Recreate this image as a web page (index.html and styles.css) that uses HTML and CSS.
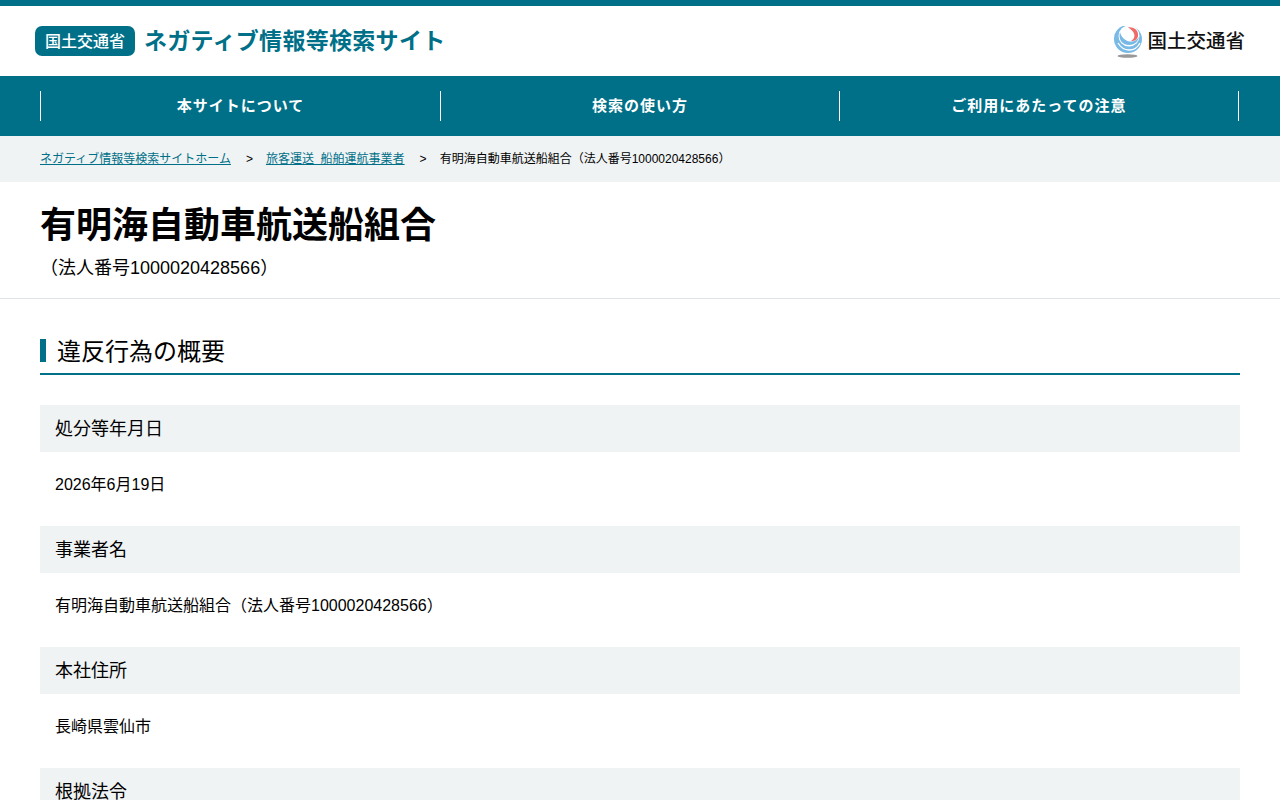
FILE: index.html
```html
<!DOCTYPE html>
<html lang="ja">
<head>
  <meta charset="UTF-8">
  <meta name="viewport" content="width=device-width, initial-scale=1.0">
  <title>有明海自動車航送船組合 | ネガティブ情報等検索サイト</title>
  <link rel="stylesheet" href="styles.css">
</head>
<body>

  <header class="ng-header">
    <a href="#" class="ng-brand">
      <span class="ng-brand__badge">国土交通省</span>
      <span class="ng-brand__name">ネガティブ情報等検索サイト</span>
    </a>
    <a href="#" class="ng-mlit">
      <svg class="ng-mlit__mark" viewBox="0 0 28 32" width="28" height="32" aria-hidden="true">
        <circle cx="14" cy="13" r="14" fill="#78b9e6"/>
        <path d="M13 0H28V10C26 4 20 -1 13 0Z" fill="#fff"/>
        <circle cx="15" cy="10" r="10.5" fill="#fff"/>
        <path d="M6 6C4 13 8 19 15 19C20 19 24 16 25 11C23 14 20 16 16 15.5C11 15 7 11 6 6Z" fill="#78b9e6"/>
        <path d="M4 17C7 22 11 24 15 24C20 24 24 21 26 17" fill="none" stroke="#fff" stroke-width="1.3"/>
        <path d="M14 1.5C20 0.5 25 5 24 10C23.5 13.5 20 16 17 14.5C20 13.5 21 10.5 20 7.5C19 5 17 3 14 1.5Z" fill="#ee6b66"/>
        <ellipse cx="13.5" cy="30" rx="10" ry="1.8" fill="#999999"/>
      </svg>
      <span class="ng-mlit__name">国土交通省</span>
    </a>
  </header>

  <nav class="ng-nav">
    <ul class="ng-nav__list">
      <li class="ng-nav__item"><a href="#">本サイトについて</a></li>
      <li class="ng-nav__item"><a href="#">検索の使い方</a></li>
      <li class="ng-nav__item"><a href="#">ご利用にあたっての注意</a></li>
    </ul>
  </nav>

  <ol class="ng-crumbs">
    <li><a href="#">ネガティブ情報等検索サイトホーム</a></li>
    <li><a href="#">旅客運送&nbsp;&nbsp;船舶運航事業者</a></li>
    <li>有明海自動車航送船組合（法人番号1000020428566）</li>
  </ol>

  <div class="ng-title">
    <h1 class="ng-title__name">有明海自動車航送船組合</h1>
    <p class="ng-title__no">（法人番号1000020428566）</p>
  </div>

  <main class="ng-main">
    <h2 class="ng-heading"><span>違反行為の概要</span></h2>

    <section class="ng-row">
      <h3 class="ng-row__label">処分等年月日</h3>
      <p class="ng-row__value">2026年6月19日</p>
    </section>
    <section class="ng-row">
      <h3 class="ng-row__label">事業者名</h3>
      <p class="ng-row__value">有明海自動車航送船組合（法人番号1000020428566）</p>
    </section>
    <section class="ng-row">
      <h3 class="ng-row__label">本社住所</h3>
      <p class="ng-row__value">長崎県雲仙市</p>
    </section>
    <section class="ng-row">
      <h3 class="ng-row__label">根拠法令</h3>
    </section>
  </main>

</body>
</html>
```

FILE: styles.css
```css
/* Root resets */
* { margin: 0; padding: 0; box-sizing: border-box; }
html, body { height: 800px; overflow: hidden; }
body { font-family: "Liberation Sans", "Noto Sans CJK JP", sans-serif; background-color: #ffffff; color: #000000; }
ul, ol { list-style: none; }

/* Header */
.ng-header {
  display: flex;
  justify-content: space-between;
  align-items: center;
  height: 76px;
  padding: 0 35px;
  border-top: 6px solid #007088;
}
.ng-brand { display: flex; align-items: center; gap: 9px; text-decoration: none; }
.ng-brand__badge {
  width: 100px;
  height: 30px;
  line-height: 31px;
  text-align: center;
  font-size: 16px;
  font-weight: 500;
  color: #ffffff;
  background-color: #007088;
  border-radius: 7px;
}
.ng-brand__name { margin-bottom: 4px; font-size: 23px; font-weight: 700; letter-spacing: 0.3px; color: #007088; font-family: "Noto Sans CJK JP", sans-serif; }
.ng-mlit { display: flex; align-items: center; gap: 5px; text-decoration: none; color: #111111; }
.ng-mlit__mark { margin-top: 2px; }
.ng-mlit__name { margin-bottom: 4px; font-size: 19.5px; font-weight: 500; font-family: "Noto Sans CJK JP", sans-serif; }

/* Nav */
.ng-nav { background-color: #007088; padding: 15px 41px 15px 40px; height: 60px; }
.ng-nav__list { display: grid; grid-template-columns: 400px 399px 399px; border-right: 1px solid #ffffff; height: 30px; }
.ng-nav__item { border-left: 1px solid #ffffff; text-align: center; }
.ng-nav__item a { display: block; line-height: 30px; font-size: 15px; font-weight: 700; letter-spacing: 1px; color: #ffffff; text-decoration: none; }

/* Breadcrumbs */
.ng-crumbs { display: flex; align-items: center; height: 46px; padding: 0 40px 4px; background-color: #f0f3f4; font-size: 12px; }
.ng-crumbs a { color: #007088; }
.ng-crumbs li + li::before { content: ">"; margin: 0 13px 0 15px; }

/* Title */
.ng-title { height: 117px; padding: 20px 40px 0; border-bottom: 1px solid #e0e4e6; }
.ng-title__name { font-size: 36px; line-height: 48px; font-weight: 700; }
.ng-title__no { font-size: 18px; line-height: 26px; margin-top: 5px; }

/* Main */
.ng-main { padding: 38px 40px 0; }
.ng-heading {
  height: 38px;
  padding-top: 2px;
  margin-bottom: 30px;
  border-bottom: 2px solid #007088;
  font-size: 24px;
  font-weight: 400;
}
.ng-heading span { display: block; height: 23px; line-height: 26px; padding-left: 11px; border-left: 6px solid #007088; }
.ng-row__label { height: 47px; line-height: 49px; padding: 0 15px; background-color: #f0f3f4; font-size: 18px; font-weight: 400; }
.ng-row__value { height: 74px; padding: 21px 15px 0; font-size: 16px; line-height: 24px; }
```
